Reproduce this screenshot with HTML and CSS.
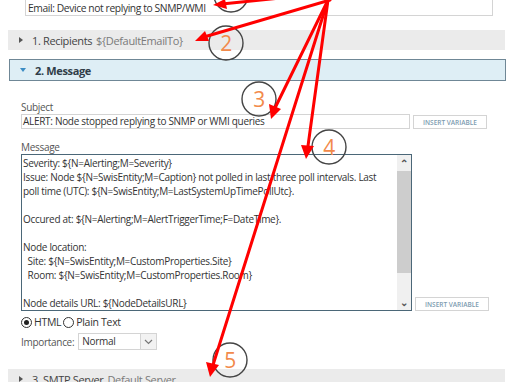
FILE: index.html
```html
<!DOCTYPE html>
<html lang="en">
<head>
    <meta charset="UTF-8">
    <title>Email action</title>
    <link rel="stylesheet" href="styles.css">
</head>
<body>
    <div class="page">
        <div class="name-row">
            <div class="field name-field">Email: Device not replying to SNMP/WMI</div>
        </div>

        <div class="section closed">
            <span class="tri tri-right"></span>
            <span class="sec-title">1. Recipients</span>
            <span class="sec-sub">${DefaultEmailTo}</span>
        </div>

        <div class="section opened">
            <span class="tri tri-down"></span>
            <span class="sec-title">2. Message</span>
        </div>

        <div class="section-body">
            <div class="label subject-label">Subject</div>
            <div class="row">
                <div class="field subject-field">ALERT: Node stopped replying to SNMP or WMI queries</div>
                <button class="insert-btn">INSERT VARIABLE</button>
            </div>

            <div class="label message-label">Message</div>
            <div class="row row-bottom">
                <div class="message-box">
                    <div class="message-text">
                        <div class="line">Severity: ${N=Alerting;M=Severity}</div>
                        <div class="line">Issue: Node ${N=SwisEntity;M=Caption} not polled in last three poll intervals. Last</div>
                        <div class="line">poll time (UTC): ${N=SwisEntity;M=LastSystemUpTimePollUtc}.</div>
                        <div class="line"></div>
                        <div class="line">Occured at: ${N=Alerting;M=AlertTriggerTime;F=DateTime}.</div>
                        <div class="line"></div>
                        <div class="line">Node location:</div>
                        <div class="line">&nbsp;&nbsp;Site: ${N=SwisEntity;M=CustomProperties.Site}</div>
                        <div class="line">&nbsp;&nbsp;Room: ${N=SwisEntity;M=CustomProperties.Room}</div>
                        <div class="line"></div>
                        <div class="line">Node details URL: ${NodeDetailsURL}</div>
                    </div>
                    <div class="scrollbar">
                        <div class="scroll-btn">&#8963;</div>
                        <div class="scroll-thumb"></div>
                        <div class="scroll-track"></div>
                        <div class="scroll-btn">&#8964;</div>
                    </div>
                </div>
                <button class="insert-btn">INSERT VARIABLE</button>
            </div>

            <div class="radios">
                <span class="radio checked"></span><span class="radio-label">HTML</span>
                <span class="radio"></span><span class="radio-label">Plain Text</span>
            </div>

            <div class="importance">
                <span class="label">Importance:</span>
                <div class="select">
                    <span class="select-value">Normal</span>
                    <span class="select-btn">
                        <svg width="9" height="6" viewBox="0 0 9 6"><path d="M1 1 L4.5 4.5 L8 1" fill="none" stroke="#777" stroke-width="1.2"/></svg>
                    </span>
                </div>
            </div>
        </div>

        <div class="section closed smtp">
            <span class="tri tri-right"></span>
            <span class="sec-title">3. SMTP Server</span>
            <span class="sec-sub">Default Server</span>
        </div>
    </div>

    <svg class="notes" width="510" height="382" viewBox="0 0 510 382">
        <g fill="none" stroke="#444" stroke-width="1.4">
            <circle cx="231" cy="-5" r="17"/>
            <circle cx="226" cy="43" r="17"/>
            <circle cx="259" cy="99" r="17"/>
            <circle cx="329" cy="147" r="17"/>
            <circle cx="230" cy="360" r="17"/>
        </g>
        <g fill="#f28a4b" font-family="Open Sans, sans-serif" font-size="21" text-anchor="middle">
            <text x="226" y="51">2</text>
            <text x="259" y="107">3</text>
            <text x="329" y="155">4</text>
            <text x="230" y="368">5</text>
        </g>
        <g stroke="#ff0000" stroke-width="3" stroke-linecap="round">
            <line x1="300" y1="-4" x2="222" y2="4"/>
            <line x1="330" y1="0" x2="204" y2="37"/>
            <line x1="328" y1="0" x2="275" y2="108"/>
            <line x1="328" y1="0" x2="308" y2="146"/>
            <line x1="328" y1="0" x2="213" y2="365"/>
        </g>
        <g fill="#ff0000">
            <polygon points="213,5 225,-1 227,9"/>
            <polygon points="195,41 205,31 209,41"/>
            <polygon points="271,119 269,104 281,109"/>
            <polygon points="306,159 301,145 314,146"/>
            <polygon points="210,377 206,362 219,365"/>
        </g>
    </svg>
</body>
</html>
```

FILE: styles.css
```css
body {
    margin: 0;
    background-color: #fff;
    font-family: "Open Sans", sans-serif;
    font-size: 10px;
    letter-spacing: -0.3px;
    color: #333;
    overflow: hidden;
}

.page {
    width: 510px;
    height: 382px;
    overflow: hidden;
}

.field {
    box-sizing: border-box;
    border: 1px solid #d4d4d4;
    background-color: #fff;
    white-space: nowrap;
    overflow: hidden;
}

.name-row {
    padding: 0 17px 0 25px;
    margin-top: -2px;
}

.name-field {
    height: 18px;
    line-height: 18px;
    padding-left: 2px;
    font-size: 10.3px;
    letter-spacing: -0.4px;
}

.section {
    display: flex;
    align-items: center;
    box-sizing: border-box;
    margin-left: 8px;
    width: 497px;
    padding-left: 10px;
    font-size: 11px;
    letter-spacing: -0.35px;
}

.section.closed {
    height: 20px;
    margin-top: 14px;
    background-color: #ebebeb;
}

.section.opened {
    height: 22px;
    margin-top: 9px;
    margin-left: 9px;
    background-color: #deeef5;
    border: 1px solid #6f8796;
}

.tri {
    width: 0;
    height: 0;
    margin-right: 9px;
}

.tri-right {
    border-top: 3px solid transparent;
    border-bottom: 3px solid transparent;
    border-left: 4px solid #555;
    margin-left: 1px;
}

.tri-down {
    border-left: 3.5px solid transparent;
    border-right: 3.5px solid transparent;
    border-top: 4px solid #3b8cc4;
}

.sec-title {
    color: #444;
    margin-right: 4px;
}

.opened .sec-title {
    font-weight: 700;
    color: #2f3d48;
}

.sec-sub {
    color: #7a7a7a;
}

.section-body {
    padding-left: 21px;
}

.label {
    color: #555;
    font-size: 10px;
}

.subject-label {
    margin-top: 20px;
    line-height: 12px;
}

.row {
    display: flex;
    align-items: flex-start;
    margin-top: 1px;
}

.row-bottom {
    align-items: flex-end;
}

.subject-field {
    width: 389px;
    height: 15px;
    line-height: 13px;
    padding-left: 1px;
}

.insert-btn {
    box-sizing: border-box;
    width: 74px;
    height: 14px;
    margin-left: 3px;
    margin-top: 1px;
    padding: 0;
    border: 1px solid #d4d4d4;
    background-color: #fff;
    color: #7c9bb0;
    font-family: "Open Sans", sans-serif;
    font-size: 6.5px;
    font-weight: 600;
    letter-spacing: 0;
}

.message-label {
    margin-top: 12px;
    line-height: 12px;
}

.message-box {
    display: flex;
    box-sizing: border-box;
    width: 391px;
    height: 157px;
    border: 1px solid #4b6778;
}

.message-text {
    flex: 1;
    padding: 1px 0 0 1px;
    line-height: 14px;
    overflow: hidden;
}

.line {
    height: 14px;
    white-space: nowrap;
}

.scrollbar {
    display: flex;
    flex-direction: column;
    width: 14px;
    background-color: #f0f0f0;
}

.scroll-btn {
    height: 16px;
    font-size: 10px;
    line-height: 16px;
    text-align: center;
    color: #555;
    font-weight: 700;
}

.scroll-thumb {
    height: 102px;
    background-color: #cdcdcd;
}

.scroll-track {
    flex: 1;
}

.radios {
    display: flex;
    align-items: center;
    height: 14px;
    margin-top: 4px;
}

.radio {
    box-sizing: border-box;
    width: 11px;
    height: 11px;
    border: 1px solid #333;
    border-radius: 50%;
    margin-right: 2px;
    position: relative;
}

.radio.checked::after {
    content: "";
    position: absolute;
    left: 2px;
    top: 2px;
    width: 5px;
    height: 5px;
    border-radius: 50%;
    background-color: #222;
}

.radio-label {
    margin-right: 2px;
    font-size: 10.5px;
}

.importance {
    display: flex;
    align-items: center;
    margin-top: 4px;
}

.importance .label {
    margin-right: 4px;
}

.select {
    display: flex;
    box-sizing: border-box;
    width: 79px;
    height: 17px;
    border: 1px solid #d4d4d4;
}

.select-value {
    flex: 1;
    padding-left: 3px;
    line-height: 15px;
}

.select-btn {
    display: flex;
    align-items: center;
    justify-content: center;
    width: 15px;
    border-left: 1px solid #d4d4d4;
    background-color: #f2f2f2;
}

.section.smtp {
    margin-top: 19px;
}

.notes {
    position: absolute;
    left: 0;
    top: 0;
    pointer-events: none;
}
```
